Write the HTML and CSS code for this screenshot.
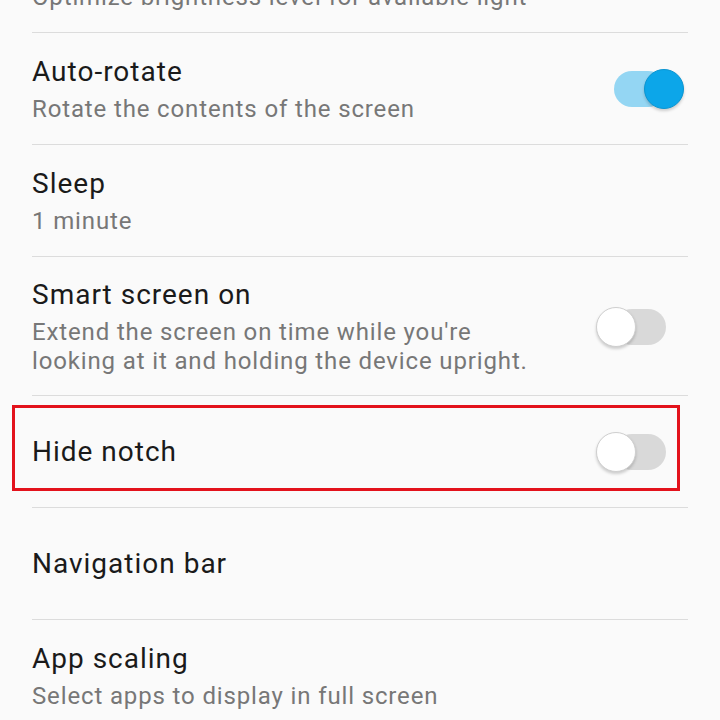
FILE: index.html
```html
<!DOCTYPE html>
<html>
<head>
<meta charset="utf-8">
<link rel="stylesheet" href="styles.css">
</head>
<body>
<div class="list">
  <div class="row first">
    <div class="text">
      <div class="title">Adaptive brightness</div>
      <div class="sub">Optimize brightness level for available light</div>
    </div>
  </div>
  <div class="row">
    <div class="text">
      <div class="title">Auto-rotate</div>
      <div class="sub">Rotate the contents of the screen</div>
    </div>
    <div class="toggle on"><span class="track"></span><span class="knob"></span></div>
  </div>
  <div class="row">
    <div class="text">
      <div class="title">Sleep</div>
      <div class="sub">1 minute</div>
    </div>
  </div>
  <div class="row">
    <div class="text">
      <div class="title">Smart screen on</div>
      <div class="sub">Extend the screen on time while you're<br>looking at it and holding the device upright.</div>
    </div>
    <div class="toggle"><span class="track"></span><span class="knob"></span></div>
  </div>
  <div class="row highlight">
    <div class="text">
      <div class="title">Hide notch</div>
    </div>
    <div class="toggle"><span class="track"></span><span class="knob"></span></div>
    <div class="redbox"></div>
  </div>
  <div class="row">
    <div class="text">
      <div class="title">Navigation bar</div>
    </div>
  </div>
  <div class="row">
    <div class="text">
      <div class="title">App scaling</div>
      <div class="sub">Select apps to display in full screen</div>
    </div>
  </div>
</div>
</body>
</html>
```
FILE: styles.css
```css
html, body {
  margin: 0;
  padding: 0;
  background: #fafafa;
  overflow: hidden;
}
body {
  width: 720px;
  height: 720px;
  font-family: Roboto, "Noto Sans", sans-serif;
}
.list {
  display: flex;
  flex-direction: column;
}
.row {
  position: relative;
  margin: 0 32px;
  box-sizing: border-box;
  min-height: 112px;
  padding: 20px 0 19px;
  border-bottom: 1px solid #dcdcdc;
  display: flex;
  align-items: center;
  justify-content: space-between;
}
.row.first {
  margin-top: -79px;
}
.text {
  display: flex;
  flex-direction: column;
  gap: 5px;
}
.title {
  font-size: 28px;
  line-height: 36px;
  letter-spacing: 1px;
  color: #1a1a1a;
}
.sub {
  font-size: 24px;
  line-height: 29px;
  letter-spacing: 0.86px;
  color: #777777;
}
.toggle {
  position: relative;
  width: 88px;
  height: 40px;
  margin-right: 4px;
  flex: none;
}
.track {
  position: absolute;
  left: 18px;
  top: 2px;
  width: 52px;
  height: 36px;
  border-radius: 18px;
  background: #d9d9d9;
}
.knob {
  position: absolute;
  left: 0;
  top: 0;
  width: 40px;
  height: 40px;
  box-sizing: border-box;
  border-radius: 50%;
  background: #ffffff;
  border: 1px solid #cfcfcf;
  box-shadow: 0 2px 3px rgba(0, 0, 0, 0.18);
}
.toggle.on .track {
  background: #94d6f3;
}
.toggle.on .knob {
  left: 48px;
  background: #0ca6e9;
  border-color: #0a95d2;
}
.redbox {
  position: absolute;
  left: -20px;
  right: 8px;
  top: 9px;
  bottom: 16px;
  border: 3px solid #e3121c;
}
```
